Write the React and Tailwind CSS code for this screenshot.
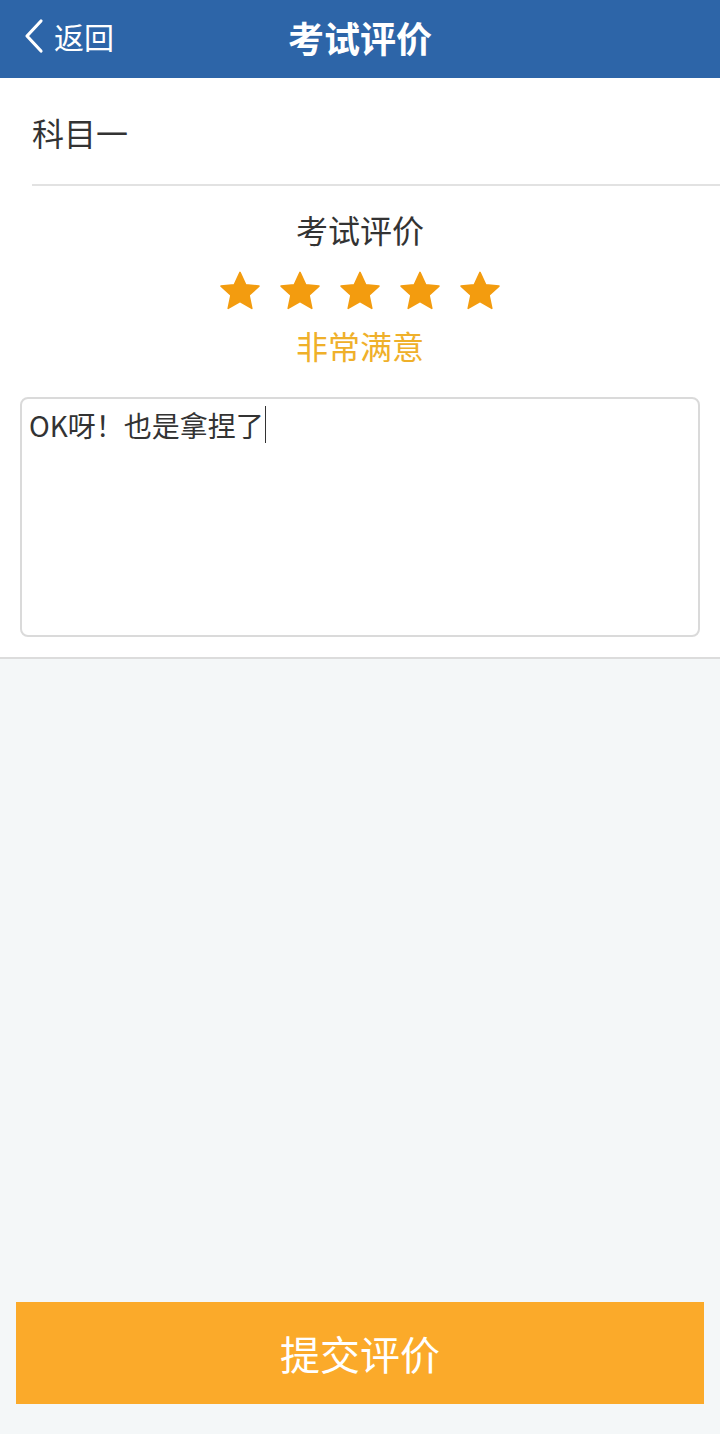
import React from "react";

const font = { fontFamily: '"Noto Sans CJK SC", "Noto Sans", sans-serif' };

function Star() {
  return (
    <svg width="42" height="40" viewBox="0 0 24 23" className="block">
      <path
        d="M12 0.8l3.3 7.1 7.6.8-5.7 5.2 1.6 7.6L12 17.6l-6.8 3.9 1.6-7.6L1.1 8.7l7.6-.8z"
        fill="#f39c0f"
        stroke="#f39c0f"
        strokeWidth="0.9"
        strokeLinejoin="round"
      />
    </svg>
  );
}

export default function App() {
  return (
    <div className="w-[720px] h-[1434px] bg-[#f4f7f8] flex flex-col" style={font}>
      <div className="h-[78px] bg-[#2d65a8] flex items-center relative shrink-0 pb-[6px]">
        <div className="flex items-center pl-[22px] text-white">
          <svg width="24" height="36" viewBox="0 0 24 36" className="block">
            <path d="M19 3L5 18l14 15" fill="none" stroke="white" strokeWidth="3.2" strokeLinecap="round" strokeLinejoin="round" />
          </svg>
          <span className="text-[30px] leading-none ml-[8px]">返回</span>
        </div>
        <div className="absolute inset-0 flex items-center justify-center pointer-events-none pb-[4px]">
          <span className="text-white text-[36px] font-bold leading-none">考试评价</span>
        </div>
      </div>

      <div className="bg-white border-b-2 border-[#dcdcdc] shrink-0">
        <div className="ml-[32px] h-[108px] border-b-2 border-[#e2e2e2] flex items-center pt-[2px]">
          <span className="text-[32px] text-[#333] leading-none">科目一</span>
        </div>
        <div className="flex flex-col items-center">
          <span className="text-[32px] text-[#333] leading-none mt-[27px]">考试评价</span>
          <div className="flex gap-[18px] mt-[26px]">
            <Star />
            <Star />
            <Star />
            <Star />
            <Star />
          </div>
          <span className="text-[32px] text-[#efb02a] leading-none mt-[18px]">非常满意</span>
        </div>
        <div className="mx-[20px] mt-[36px] mb-[20px] h-[240px] border-2 border-[#dadada] rounded-[8px] pl-[7px] pt-[7px]">
          <div className="flex items-center">
            <span className="text-[28px] text-[#333] leading-none">OK呀！也是拿捏了</span>
            <span className="w-[1px] h-[37px] bg-[#333] ml-[1px]"></span>
          </div>
        </div>
      </div>

      <div className="flex-1"></div>

      <div className="px-[16px] pb-[30px] shrink-0">
        <button className="w-full h-[102px] bg-[#fbaa2a] text-white text-[40px] leading-none flex items-center justify-center">
          提交评价
        </button>
      </div>
    </div>
  );
}
